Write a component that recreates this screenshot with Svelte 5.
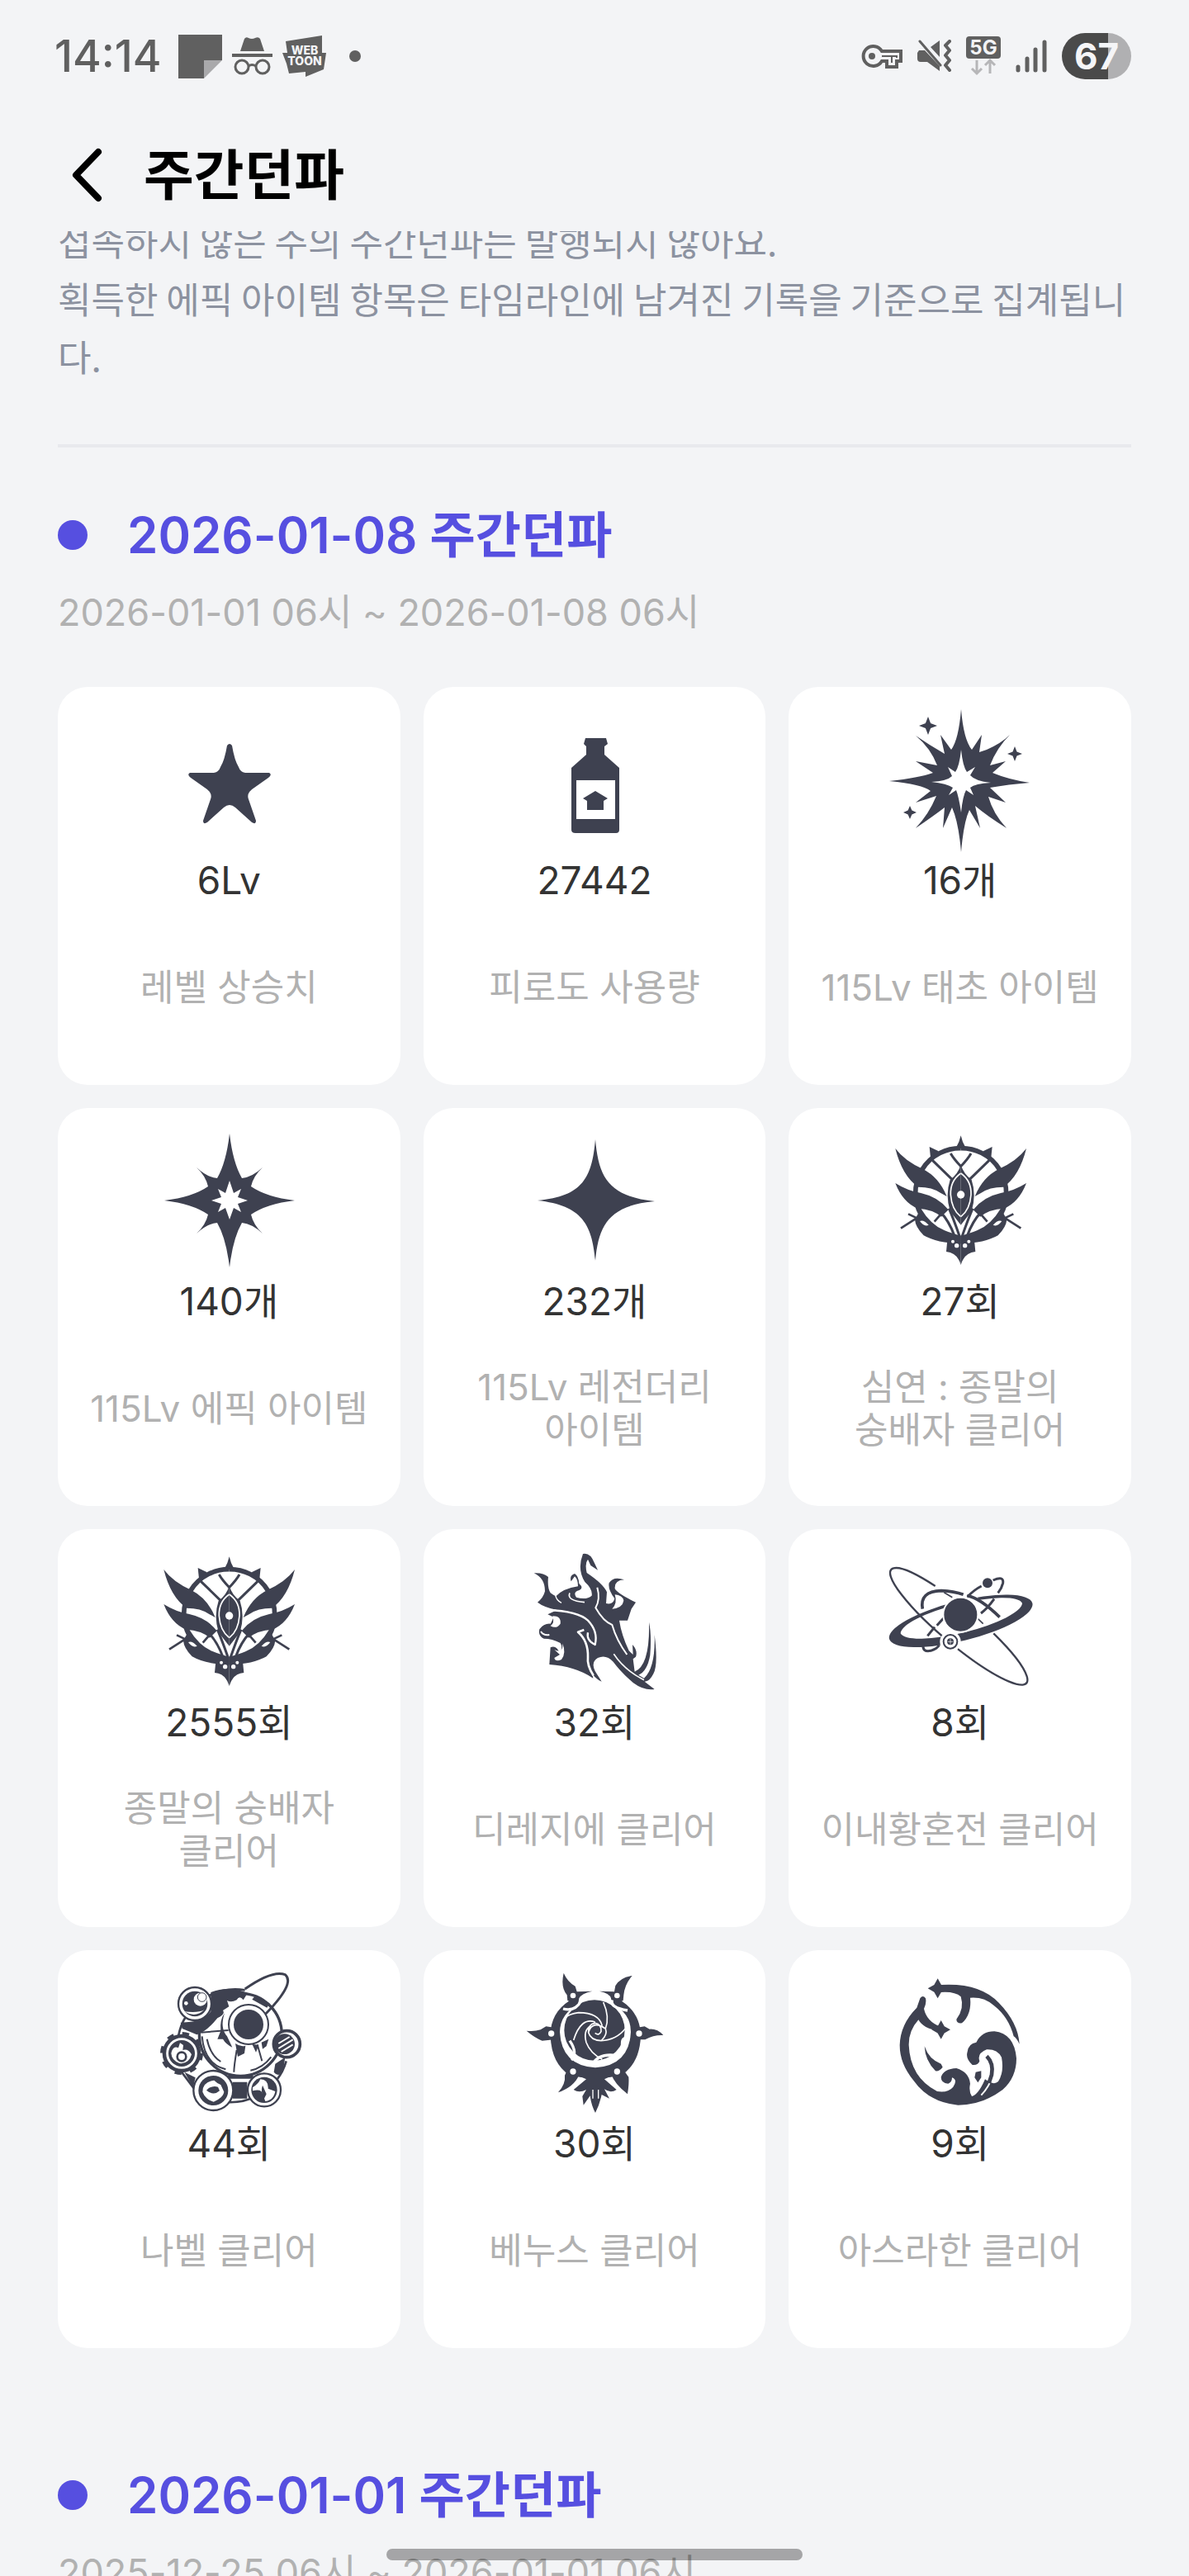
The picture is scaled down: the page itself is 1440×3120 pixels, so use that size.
<script lang="ts">
	type Stat = { icon: string; value: string; label: string };
	type Week = { date: string; range: string; stats: Stat[] };

	const weeks: Week[] = [
		{
			date: '2026-01-08',
			range: '2026-01-01 06시 ~ 2026-01-08 06시',
			stats: [
				{ icon: 'level', value: '6Lv', label: '레벨 상승치' },
				{ icon: 'fatigue', value: '27442', label: '피로도 사용량' },
				{ icon: 'primeval', value: '16개', label: '115Lv 태초 아이템' },
				{ icon: 'epic', value: '140개', label: '115Lv 에픽 아이템' },
				{ icon: 'legendary', value: '232개', label: '115Lv 레전더리 아이템' },
				{ icon: 'apocalypse', value: '27회', label: '심연 : 종말의 숭배자 클리어' },
				{ icon: 'apocalypse', value: '2555회', label: '종말의 숭배자 클리어' },
				{ icon: 'diregie', value: '32회', label: '디레지에 클리어' },
				{ icon: 'twilight', value: '8회', label: '이내황혼전 클리어' },
				{ icon: 'nabel', value: '44회', label: '나벨 클리어' },
				{ icon: 'venus', value: '30회', label: '베누스 클리어' },
				{ icon: 'asrahan', value: '9회', label: '아스라한 클리어' }
			]
		},
		{ date: '2026-01-01', range: '2025-12-25 06시 ~ 2026-01-01 06시', stats: [] }
	];

	// four-pointed sparkle
	function sparkle(cx: number, cy: number, r: number, waist = 0.22) {
		const k = r * waist;
		return `M${cx} ${cy - r} L${cx + k} ${cy - k} L${cx + r} ${cy} L${cx + k} ${cy + k} L${cx} ${cy + r} L${cx - k} ${cy + k} L${cx - r} ${cy} L${cx - k} ${cy - k}Z`;
	}

	const viewBoxes: Record<string, string> = {
		apocalypse: '99 47 540 540',
		diregie: '90 18 540 540',
		twilight: '99 18 540 540',
		nabel: '81 49 540 540',
		venus: '90 49 540 540',
		asrahan: '0 49 540 540'
	};
</script>

{#snippet emblemHalf()}
	<path d="M371 121 A163 163 0 0 0 226 362" fill="none" stroke="currentColor" stroke-width="17" />
	<path d="M257 116 L290 132 L262 165Z" />
	<path d="M133 122 Q168 168 232 196 Q292 226 320 296 L298 284 Q268 262 216 262 Q158 222 133 122Z" />
	<path d="M133 248 Q178 276 226 284 Q290 298 326 345 L300 370 Q270 343 214 340 Q160 318 133 248Z" />
	<path d="M226 340 Q262 400 312 420 Q345 434 371 438 V468 Q284 466 236 438 Q206 408 204 380Z" />
	<path d="M180 360 L232 385 M153 412 L228 364 M275 388 L312 345" fill="none" stroke="currentColor" stroke-width="8" />
	<path
		d="M268 165 L345 240 M334 140 Q345 160 372 188 M296 352 Q328 385 348 440 M328 340 Q345 380 366 440"
		fill="none"
		stroke="currentColor"
		stroke-width="9"
	/>
	<path d="M371 180 Q362 214 332 236 Q314 290 332 350 Q352 376 371 400Z" />
	<path d="M318 497 L322 456 L371 440 V545 Q358 500 318 497Z" />
	<path d="M222 386 Q236 380 254 400 Q238 408 222 386Z" fill="#fff" />
	<path d="M371 212 Q332 240 334 290 Q338 345 371 370" fill="none" stroke="#fff" stroke-width="5" />
	<circle cx="342" cy="460" r="6" fill="#fff" />
	<circle cx="356" cy="475" r="8" fill="#fff" />
{/snippet}

{#snippet statIcon(name: string)}
	<svg class="stat-icon" viewBox={viewBoxes[name] ?? '0 0 180 180'} aria-hidden="true">
		{#if name === 'level'}
			<path
				d="M88 47 Q91 43 94 47 Q97 65 102 73 Q104 79 110 80 L139 80 Q143 82 138 86 L121 98 Q111 104 114 112 L123 138 Q123 143 118 140 L98 122 Q91 116 84 122 L64 140 Q59 143 59 138 L68 112 Q71 104 61 98 L44 86 Q39 82 43 80 L72 80 Q78 79 80 73 Q85 65 88 47Z"
			/>
		{:else if name === 'fatigue'}
			<path
				fill-rule="evenodd"
				d="M79 38 H104 L106 45 L102 48 V58 L120 74 V149 Q120 153 116 153 H67 Q62 153 62 149 V74 L80 58 V48 L77 45Z M68 89 V136 H115 V89Z"
			/>
			<path d="M91 102 L106 111 L101 114 V125 H81 V114 L76 111Z" />
		{:else if name === 'primeval'}
			<path
				fill-rule="evenodd"
				d="M91 3 Q94 40 104 52 L116 34 L113 55 L122 52 Q140 44 150 34 Q134 50 126 71 L145 66 L129 80 Q148 88 174 92 Q148 94 126 98 L145 116 L124 109 Q130 130 146 147 Q122 132 108 120 L114 147 L101 125 Q94 140 91 176 Q88 140 80 122 L69 147 L71 122 Q58 132 36 147 Q52 130 61 108 L36 116 L54 102 Q44 94 4 90 Q40 86 57 80 L36 66 L62 71 Q54 50 36 35 Q52 46 71 57 L66 34 L79 52 Q88 40 91 3Z
				M91 52 Q89 72 84 79 L75 73 L80 84 Q74 90 55 91 Q74 93 81 98 L76 107 L85 101 Q88 108 91 128 Q93 108 97 101 L106 107 L102 98 Q108 93 127 92 Q108 90 102 83 L108 73 L98 79 Q93 72 91 52Z"
			/>
			<path d={sparkle(51, 23, 11, 0.28)} />
			<path d={sparkle(156, 57, 9, 0.28)} />
			<path d={sparkle(29, 128, 8, 0.3)} />
		{:else if name === 'epic'}
			<path
				fill-rule="evenodd"
				d="M91 7 Q95 42 106 61 Q118 60 131 48 Q120 58 117 71 Q136 84 170 88 Q136 92 117 105 Q120 118 131 128 Q118 116 106 115 Q95 134 91 169 Q87 134 76 115 Q64 116 51 128 Q62 118 65 105 Q46 92 12 88 Q46 84 65 71 Q62 58 51 48 Q64 60 76 61 Q87 42 91 7Z
				M91 64 L86 79 L77 74 L81 84 L69 88 L81 92 L77 102 L86 97 L91 111 L96 97 L105 102 L101 92 L113 88 L101 84 L105 74 L96 79Z"
			/>
		{:else if name === 'legendary'}
			<path
				d="M91 14 C95 60 107 83 163 89 C107 94 95 118 91 161 C87 118 76 94 21 88 C76 83 87 60 91 14Z"
			/>
		{:else if name === 'apocalypse'}
			<g>{@render emblemHalf()}</g>
			<g transform="translate(742 0) scale(-1 1)">{@render emblemHalf()}</g>
			<path d="M371 75 Q376 100 390 122 H352 Q366 100 371 75Z" />
			<circle cx="371" cy="290" r="14" fill="#fff" />
		{:else if name === 'diregie'}
			<path
				d="M140 106 Q175 104 192 120 Q188 158 200 178 Q214 188 220 190 Q246 162 300 154 Q300 128 288 118 L275 136 Q268 114 288 108 Q302 116 304 144 Q322 160 305 168 Q280 174 294 194 Q330 205 350 188 Q354 164 325 138 Q296 92 318 36 Q345 30 360 70 L372 95 L346 78 L336 56 Q324 70 332 105 Q392 145 405 175 L402 216 Q428 222 433 198 Q408 165 413 142 Q428 116 468 130 Q432 132 434 162 Q440 178 510 212 L494 236 L480 278 L450 278 Q458 330 485 388 L500 402 L498 366 Q518 388 510 410 L500 418 L506 464 Q562 440 558 284 Q568 330 562 404 Q552 462 520 476 L540 488 Q582 450 578 330 Q592 440 574 472 Q560 500 542 500 L578 528 Q540 534 500 504 Q456 466 428 428 Q402 400 372 414 Q346 430 362 462 L386 500 Q366 492 352 472 L355 488 Q290 444 196 438 L200 376 Q222 366 234 398 Q246 376 236 360 Q206 344 176 344 Q154 334 160 310 Q176 288 200 290 L212 266 L190 256 L224 240 Q176 230 153 212 Q174 196 180 172 Q180 124 140 106Z"
			/>
			<g fill="none" stroke="#fff" stroke-linejoin="round">
				<path d="M190 240 Q300 244 336 278 Q374 318 362 366 Q330 352 336 322" stroke-width="7" />
				<path d="M322 312 L300 320 Q338 352 336 412 Q332 440 356 478" stroke-width="8" />
				<path d="M370 158 Q382 200 364 232 Q392 282 424 294 Q440 350 478 402" stroke-width="6" />
				<path d="M218 186 Q222 206 240 214" stroke-width="4" />
				<path d="M270 178 Q258 206 324 212" stroke-width="5" />
				<path d="M430 400 Q470 460 540 494" stroke-width="5" />
				<path d="M165 318 Q175 334 196 330" stroke-width="6" />
			</g>
			<path
				d="M208 262 Q240 262 236 290 Q222 310 200 298 Q216 288 208 262Z M214 384 Q246 400 244 362 Q258 396 240 420 Q218 430 214 414 L234 402Z M434 184 Q462 186 466 206 Q462 232 424 236 Q444 216 434 184Z"
				fill="#fff"
			/>
		{:else if name === 'twilight'}
			<path
				fill-rule="evenodd"
				d="M111 345 A268 72 -14 0 1 631 215 A268 72 -14 0 1 111 345Z M152 325 A228 55 -14 0 0 594 215 A228 55 -14 0 0 152 325Z"
			/>
			<path d="M308 220 L300 170 H420 L440 210Z" fill="#fff" />
			<g fill="none" stroke="currentColor">
				<path d="M490 325 A321 66 40 1 1 278 153" stroke-width="7" />
				<path d="M232 236 Q220 172 300 170 Q346 172 380 184 M394 188 Q440 196 512 266" stroke-width="11" />
				<path
					d="M395 192 Q420 166 446 153 M488 132 Q528 114 524 142 Q520 160 506 178 M492 200 Q468 234 444 252 M310 268 L284 296 M276 302 L250 334 M234 366 Q230 394 262 388 Q286 380 292 368"
					stroke-width="9"
				/>
				<path d="M310 176 L340 194 M425 264 L452 290" stroke-width="5" />
			</g>
			<circle cx="370" cy="257" r="63" stroke="#fff" stroke-width="6" />
			<circle cx="468" cy="142" r="18" />
			<circle cx="333" cy="355" r="38" fill="#fff" />
			<circle cx="333" cy="355" r="25" fill="none" stroke="currentColor" stroke-width="6" />
			<circle cx="333" cy="355" r="12" />
			<path d="M323 355 H343 M333 345 V365" stroke="#fff" stroke-width="2" />
		{:else if name === 'nabel'}
			<g fill="none" stroke="currentColor">
				<path d="M168 290 A212 206 0 0 1 410 122 M560 380 A212 206 0 0 1 330 528 M225 480 L165 400" stroke-width="8" />
				<circle cx="394" cy="284" r="150" stroke-width="10" />
				<path d="M254 290 Q262 390 340 410 M272 300 Q285 360 322 382 M505 365 Q475 405 430 414" stroke-width="6" />
				<path d="M410 118 Q510 48 556 66 Q596 98 476 218" stroke-width="9" />
				<path d="M250 276 L350 268 M380 340 Q370 400 370 420 M455 320 L472 380" stroke-width="6" />
			</g>
			<path d="M286 130 Q350 105 420 132 L404 158 Q390 140 380 158 Q360 168 345 160 L352 182 L330 196 Q340 210 310 224 Q270 274 235 284 L182 262 L176 240 Q260 240 286 200Z" />
			<path d="M446 144 L500 170 L490 186 L436 156Z M336 206 Q318 260 345 290 L364 330 Q340 318 330 300 L310 300 L322 270 Q318 230 336 206Z M375 316 Q395 330 412 324 L408 352 L384 364Z M470 312 L496 300 L488 326 L474 336Z M436 318 L460 322 L450 348Z" />
			<path d="M520 390 L556 366 L548 420 Q530 440 515 420Z M365 456 H418 V516 H365Z M190 420 L230 440 L222 476Z M330 432 H440 V444 H330Z" />
			<circle cx="423" cy="247" r="72" fill="#fff" stroke="currentColor" stroke-width="6" />
			<circle cx="423" cy="247" r="54" />
			<circle cx="180" cy="352" r="70" stroke="currentColor" stroke-width="16" stroke-dasharray="24 31" />
			<g fill="#fff" stroke="currentColor" stroke-width="7">
				<circle cx="228" cy="172" r="60" />
				<circle cx="180" cy="352" r="60" />
				<circle cx="295" cy="487" r="72" />
				<circle cx="480" cy="485" r="60" />
				<circle cx="562" cy="318" r="48" stroke-width="11" />
			</g>
			<circle cx="228" cy="172" r="46" />
			<circle cx="180" cy="352" r="48" />
			<circle cx="295" cy="487" r="54" />
			<circle cx="480" cy="485" r="47" />
			<circle cx="554" cy="318" r="37" />
			<g fill="#fff">
				<circle cx="248" cy="156" r="24" />
				<circle cx="196" cy="170" r="7" />
				<path d="M190 200 Q230 224 262 194 Q240 206 190 200Z" />
				<path d="M142 352 Q148 322 168 332 L174 314 L186 322 L184 340 Q204 334 216 356 Q206 392 172 388 Q144 378 142 352Z" />
				<path d="M256 492 Q256 456 298 450 Q310 462 322 466 L334 492 Q330 514 296 528 Q266 520 256 492Z" />
				<path d="M438 476 Q460 462 466 446 Q496 448 494 480 L520 490 Q514 522 484 526 L474 500 Q472 480 438 488Z" />
			</g>
			<path d="M270 486 Q290 466 312 474 L318 488 Q296 508 270 486Z M474 468 Q466 490 478 520 L488 500Z" />
			<circle cx="180" cy="364" r="16" fill="none" stroke="currentColor" stroke-width="8" />
			<circle cx="254" cy="148" r="16" fill="none" stroke="currentColor" stroke-width="3" />
			<path d="M532 316 L572 292 M532 334 L584 302 M542 346 L584 320" stroke="#fff" stroke-width="6" />
		{:else if name === 'venus'}
			<path
				fill-rule="evenodd"
				d="M270 160 Q198 206 200 290 Q204 390 270 432 Q362 452 456 432 Q524 390 528 290 Q528 206 456 160 L424 172 Q492 206 492 274 Q486 396 363 404 Q240 396 234 274 Q236 206 302 174Z"
			/>
			<path
				d="M248 60 Q262 92 290 108 L296 128 L352 126 Q312 134 304 152 L300 176 L262 160 L260 140 Q236 112 248 60Z M497 70 Q454 76 436 106 L432 128 L378 126 Q416 134 420 152 L424 178 L464 160 L466 140 Q470 100 497 70Z"
			/>
			<path d="M113 270 Q140 274 164 266 L184 254 L212 258 V302 L170 306 Q144 296 113 270Z M610 286 Q588 262 560 264 L542 254 L516 258 V302 L544 302 Q576 284 610 286Z" />
			<path d="M262 410 L304 430 Q286 474 228 494 Q256 462 252 432Z M464 410 L422 430 Q432 462 480 500 Q486 462 484 438Z" />
			<path d="M294 430 H430 L396 446 L440 484 Q418 498 396 482 L414 516 L386 502 Q378 540 363 568 Q348 540 344 506 L320 540 L316 508 L330 484 Q304 498 284 484 L330 446Z" />
			<circle cx="360" cy="268" r="110" />
			<g fill="none" stroke="#fff">
				<path d="M354 484 V516 M374 484 V516" stroke-width="4" />
				<path
					d="M362 278 Q376 290 384 272 Q386 246 362 242 Q336 246 338 276 Q346 304 384 306 Q440 304 474 260 M346 252 Q318 268 330 312 Q344 350 388 374 M338 276 Q352 230 400 262 Q416 220 392 166 M400 262 Q408 284 386 304 M362 238 Q310 220 284 304 M388 252 Q376 204 302 204 Q268 208 252 224"
					stroke-width="5"
				/>
				<path d="M246 190 Q290 202 312 160 M424 158 Q416 186 480 196 M270 306 Q300 350 276 376 M352 392 Q376 350 440 360 M474 300 Q456 290 462 340" stroke-width="10" />
			</g>
			<g fill="#fff">
				<circle cx="282" cy="142" r="10" />
				<circle cx="442" cy="142" r="10" />
				<circle cx="203" cy="280" r="11" />
				<circle cx="522" cy="280" r="11" />
				<circle cx="282" cy="418" r="11" />
				<circle cx="442" cy="418" r="11" />
			</g>
		{:else if name === 'asrahan'}
			<path d={sparkle(188, 116, 36, 0.36)} />
			<path d={sparkle(200, 266, 34, 0.36)} />
			<path
				d="M198 103 Q340 94 410 168 Q480 240 485 318 Q474 296 464 290 Q446 220 392 178 Q356 146 306 150 Q312 210 276 242 Q256 244 256 228 Q286 190 272 146 Q250 126 198 130Z"
			/>
			<path
				d="M124 152 Q134 138 144 152 Q148 170 138 190 Q148 236 196 254 L190 270 Q136 262 118 230 Q82 270 83 322 Q88 440 186 490 Q226 496 244 474 Q262 448 240 440 Q240 458 226 462 Q200 460 200 438 Q210 408 256 406 Q302 420 306 462 Q300 490 312 508 Q336 502 360 446 Q392 470 408 454 Q430 420 420 366 Q404 336 366 338 Q330 352 340 380 Q336 396 314 394 Q288 370 296 346 Q300 316 328 312 Q348 272 394 272 Q466 280 474 370 Q474 440 424 484 Q350 540 262 540 Q156 530 100 450 Q50 390 50 322 Q52 246 112 186Z"
			/>
			<path d="M140 326 Q156 374 200 390 L206 402 Q194 418 180 416 Q142 378 140 326Z M326 420 L346 416 V440 L334 458 L322 440Z" />
			<path d="M366 362 Q398 376 386 436 Q376 472 346 504" fill="none" stroke="#fff" stroke-width="6" />
			<path d="M366 362 Q392 388 384 430 L374 460" fill="none" stroke="currentColor" stroke-width="14" />
		{/if}
	</svg>
{/snippet}

<div class="screen">
	<div class="status-bar">
		<div class="status-left">
			<span class="clock">14:14</span>
			<svg width="53" height="53" viewBox="0 0 53 53" aria-hidden="true">
				<path d="M0 0H53V31H31V53H0Z" fill="#606060" />
				<path d="M31 31H53L31 53Z" fill="#a9a9ab" />
			</svg>
			<svg width="49" height="46" viewBox="0 0 49 46" aria-hidden="true">
				<path d="M10 17 L15 2 Q17 -1 20 1 Q24 3 28 1 Q32 -1 34 2 L39 17Z" fill="#606060" />
				<rect y="20" width="49" height="4" fill="#606060" />
				<g fill="none" stroke="#606060" stroke-width="3">
					<circle cx="12" cy="36" r="8" />
					<circle cx="37" cy="36" r="8" />
					<path d="M20 35 Q24 32 29 35" />
				</g>
			</svg>
			<svg width="53" height="50" viewBox="0 0 53 50" aria-hidden="true">
				<path d="M4 7 L48 0 V21 H53 L50 41 L28 50 V44 L8 46 L5 34 L0 21 H6Z" fill="#606060" />
				<text x="27" y="23" class="webtoon">WEB</text>
				<text x="27" y="36" class="webtoon">TOON</text>
			</svg>
			<span class="more-dot"></span>
		</div>
		<div class="status-right">
			<svg width="51" height="30" viewBox="0 0 51 30" aria-hidden="true">
				<path
					d="M26 9 A12 12 0 1 0 26 21 H32 V28 H44 V21 H49 V9Z"
					fill="none"
					stroke="#606060"
					stroke-width="4"
				/>
				<circle cx="14" cy="15" r="4" fill="#606060" />
				<path d="M26 15 H44 V17 M38 15 V23" stroke="#606060" stroke-width="2" fill="none" />
			</svg>
			<svg width="41" height="40" viewBox="0 0 41 40" aria-hidden="true">
				<path d="M2 13 H9 L27 32 V38 L12 27 H4 Q0 27 0 23 V16Z M16 9 L27 1 V21Z" fill="#606060" />
				<path d="M3 2 L28 31" stroke="#606060" stroke-width="3" stroke-linecap="round" />
				<path
					d="M39 2 L34 7 L39 13 L34 19 L39 25 L34 31 L39 37"
					fill="none"
					stroke="#606060"
					stroke-width="4"
					stroke-linejoin="round"
					stroke-linecap="round"
				/>
			</svg>
			<svg width="42" height="48" viewBox="0 0 42 48" aria-hidden="true">
				<rect width="42" height="27" rx="4" fill="#606060" />
				<text x="21" y="22" class="network">5G</text>
				<path
					d="M13 29 V45 M7 39 L13 45 L19 39 M29 45 V29 M23 35 L29 29 L35 35"
					fill="none"
					stroke="#b6b6b8"
					stroke-width="3"
				/>
			</svg>
			<svg width="38" height="40" viewBox="0 0 38 40" aria-hidden="true">
				<g stroke="#606060" stroke-width="5" stroke-linecap="round">
					<path d="M3 33 V37 M14 23 V37 M24 12 V37 M35 3 V37" />
				</g>
			</svg>
			<span class="battery">67</span>
		</div>
	</div>

	<header>
		<button type="button" class="back" aria-label="뒤로">
			<svg width="38" height="66" viewBox="0 0 38 66" aria-hidden="true">
				<path
					d="M33 5 L6 33 L33 61"
					fill="none"
					stroke="#000"
					stroke-width="8"
					stroke-linecap="round"
					stroke-linejoin="round"
				/>
			</svg>
		</button>
		<h1>주간던파</h1>
	</header>

	<main>
		<p class="notice">
			접속하지 않은 주의 주간던파는 발행되지 않아요.<br />
			획득한 에픽 아이템 항목은 타임라인에 남겨진 기록을 기준으로 집계됩니다.
		</p>
		<hr />
		{#each weeks as week}
			<section>
				<h2><span class="bullet"></span>{week.date} 주간던파</h2>
				<p class="range">{week.range}</p>
				<ul>
					{#each week.stats as stat}
						<li>
							{@render statIcon(stat.icon)}
							<strong>{stat.value}</strong>
							<span class="label">{stat.label}</span>
						</li>
					{/each}
				</ul>
			</section>
		{/each}
	</main>

	<div class="home-indicator"></div>
</div>

<style>
	:global(body) {
		margin: 0;
		background: #f3f4f6;
	}

	.screen {
		position: relative;
		display: flex;
		flex-direction: column;
		height: 100vh;
		overflow: hidden;
		background: #f3f4f6;
		font-family: Inter, 'Noto Sans CJK KR', sans-serif;
	}

	.status-bar {
		display: flex;
		justify-content: space-between;
		align-items: center;
		height: 136px;
		padding: 0 70px 0 66px;
	}
	.status-left,
	.status-right {
		display: flex;
		align-items: center;
	}
	.status-left {
		gap: 12px;
	}
	.status-right {
		gap: 18px;
	}
	.clock {
		margin-right: 8px;
		color: #606060;
		font-size: 53px;
		font-weight: 500;
	}
	.webtoon {
		fill: #f3f4f6;
		font-size: 14px;
		font-weight: 800;
		text-anchor: middle;
	}
	.network {
		fill: #f3f4f6;
		font-size: 24px;
		font-weight: 700;
		text-anchor: middle;
	}
	.more-dot {
		width: 14px;
		height: 14px;
		margin-left: 16px;
		border-radius: 50%;
		background: #606060;
	}
	.battery {
		width: 84px;
		border-radius: 28px;
		background: linear-gradient(90deg, #4a4a4a 67%, #b0b0b2 67%);
		color: #f5f5f7;
		font-size: 44px;
		font-weight: 700;
		line-height: 56px;
		text-align: center;
	}

	header {
		display: flex;
		align-items: center;
		gap: 50px;
		height: 136px;
		padding: 8px 86px 0;
	}
	.back {
		display: flex;
		padding: 0;
		border: none;
		background: none;
		cursor: pointer;
	}
	h1 {
		margin: 0;
		font-size: 66px;
		font-weight: 700;
		line-height: 80px;
	}

	main {
		flex: 1;
		min-height: 0;
		overflow: hidden;
		padding: 0 70px;
	}
	.notice {
		margin: -24px 0 72px;
		color: #8c92a0;
		font-family: 'Noto Sans CJK KR', sans-serif;
		font-size: 44px;
		line-height: 70px;
	}
	hr {
		height: 4px;
		margin: 0 0 64px;
		border: none;
		background: #e8e9ed;
	}
	section {
		margin-bottom: 136px;
	}
	h2 {
		display: flex;
		align-items: center;
		margin: 0 0 20px;
		color: #564fe0;
		font-size: 60px;
		font-weight: 600;
		line-height: 84px;
	}
	.bullet {
		width: 36px;
		height: 36px;
		margin-right: 48px;
		border-radius: 50%;
		background: #564fe0;
	}
	.range {
		margin: 0 0 58px;
		color: #b1b1b1;
		font-size: 45px;
		line-height: 64px;
	}

	ul {
		display: grid;
		grid-template-columns: repeat(3, 1fr);
		gap: 28px;
		margin: 0;
		padding: 0;
		list-style: none;
	}
	li {
		display: flex;
		flex-direction: column;
		align-items: center;
		padding: 24px 24px 66px;
		border-radius: 36px;
		background: #fff;
	}
	.stat-icon {
		width: 180px;
		height: 180px;
		color: #3e4150;
		fill: currentColor;
	}
	strong {
		margin-bottom: 48px;
		color: #333;
		font-size: 46px;
		font-weight: 400;
		line-height: 60px;
	}
	.label {
		display: flex;
		align-items: center;
		min-height: 104px;
		color: #b1b1b1;
		font-size: 44px;
		line-height: 52px;
		text-align: center;
		word-break: keep-all;
	}

	.home-indicator {
		position: absolute;
		bottom: 19px;
		left: 50%;
		width: 35%;
		height: 14px;
		border-radius: 7px;
		background: rgba(0, 0, 0, 0.32);
		transform: translateX(-50%);
	}
</style>
